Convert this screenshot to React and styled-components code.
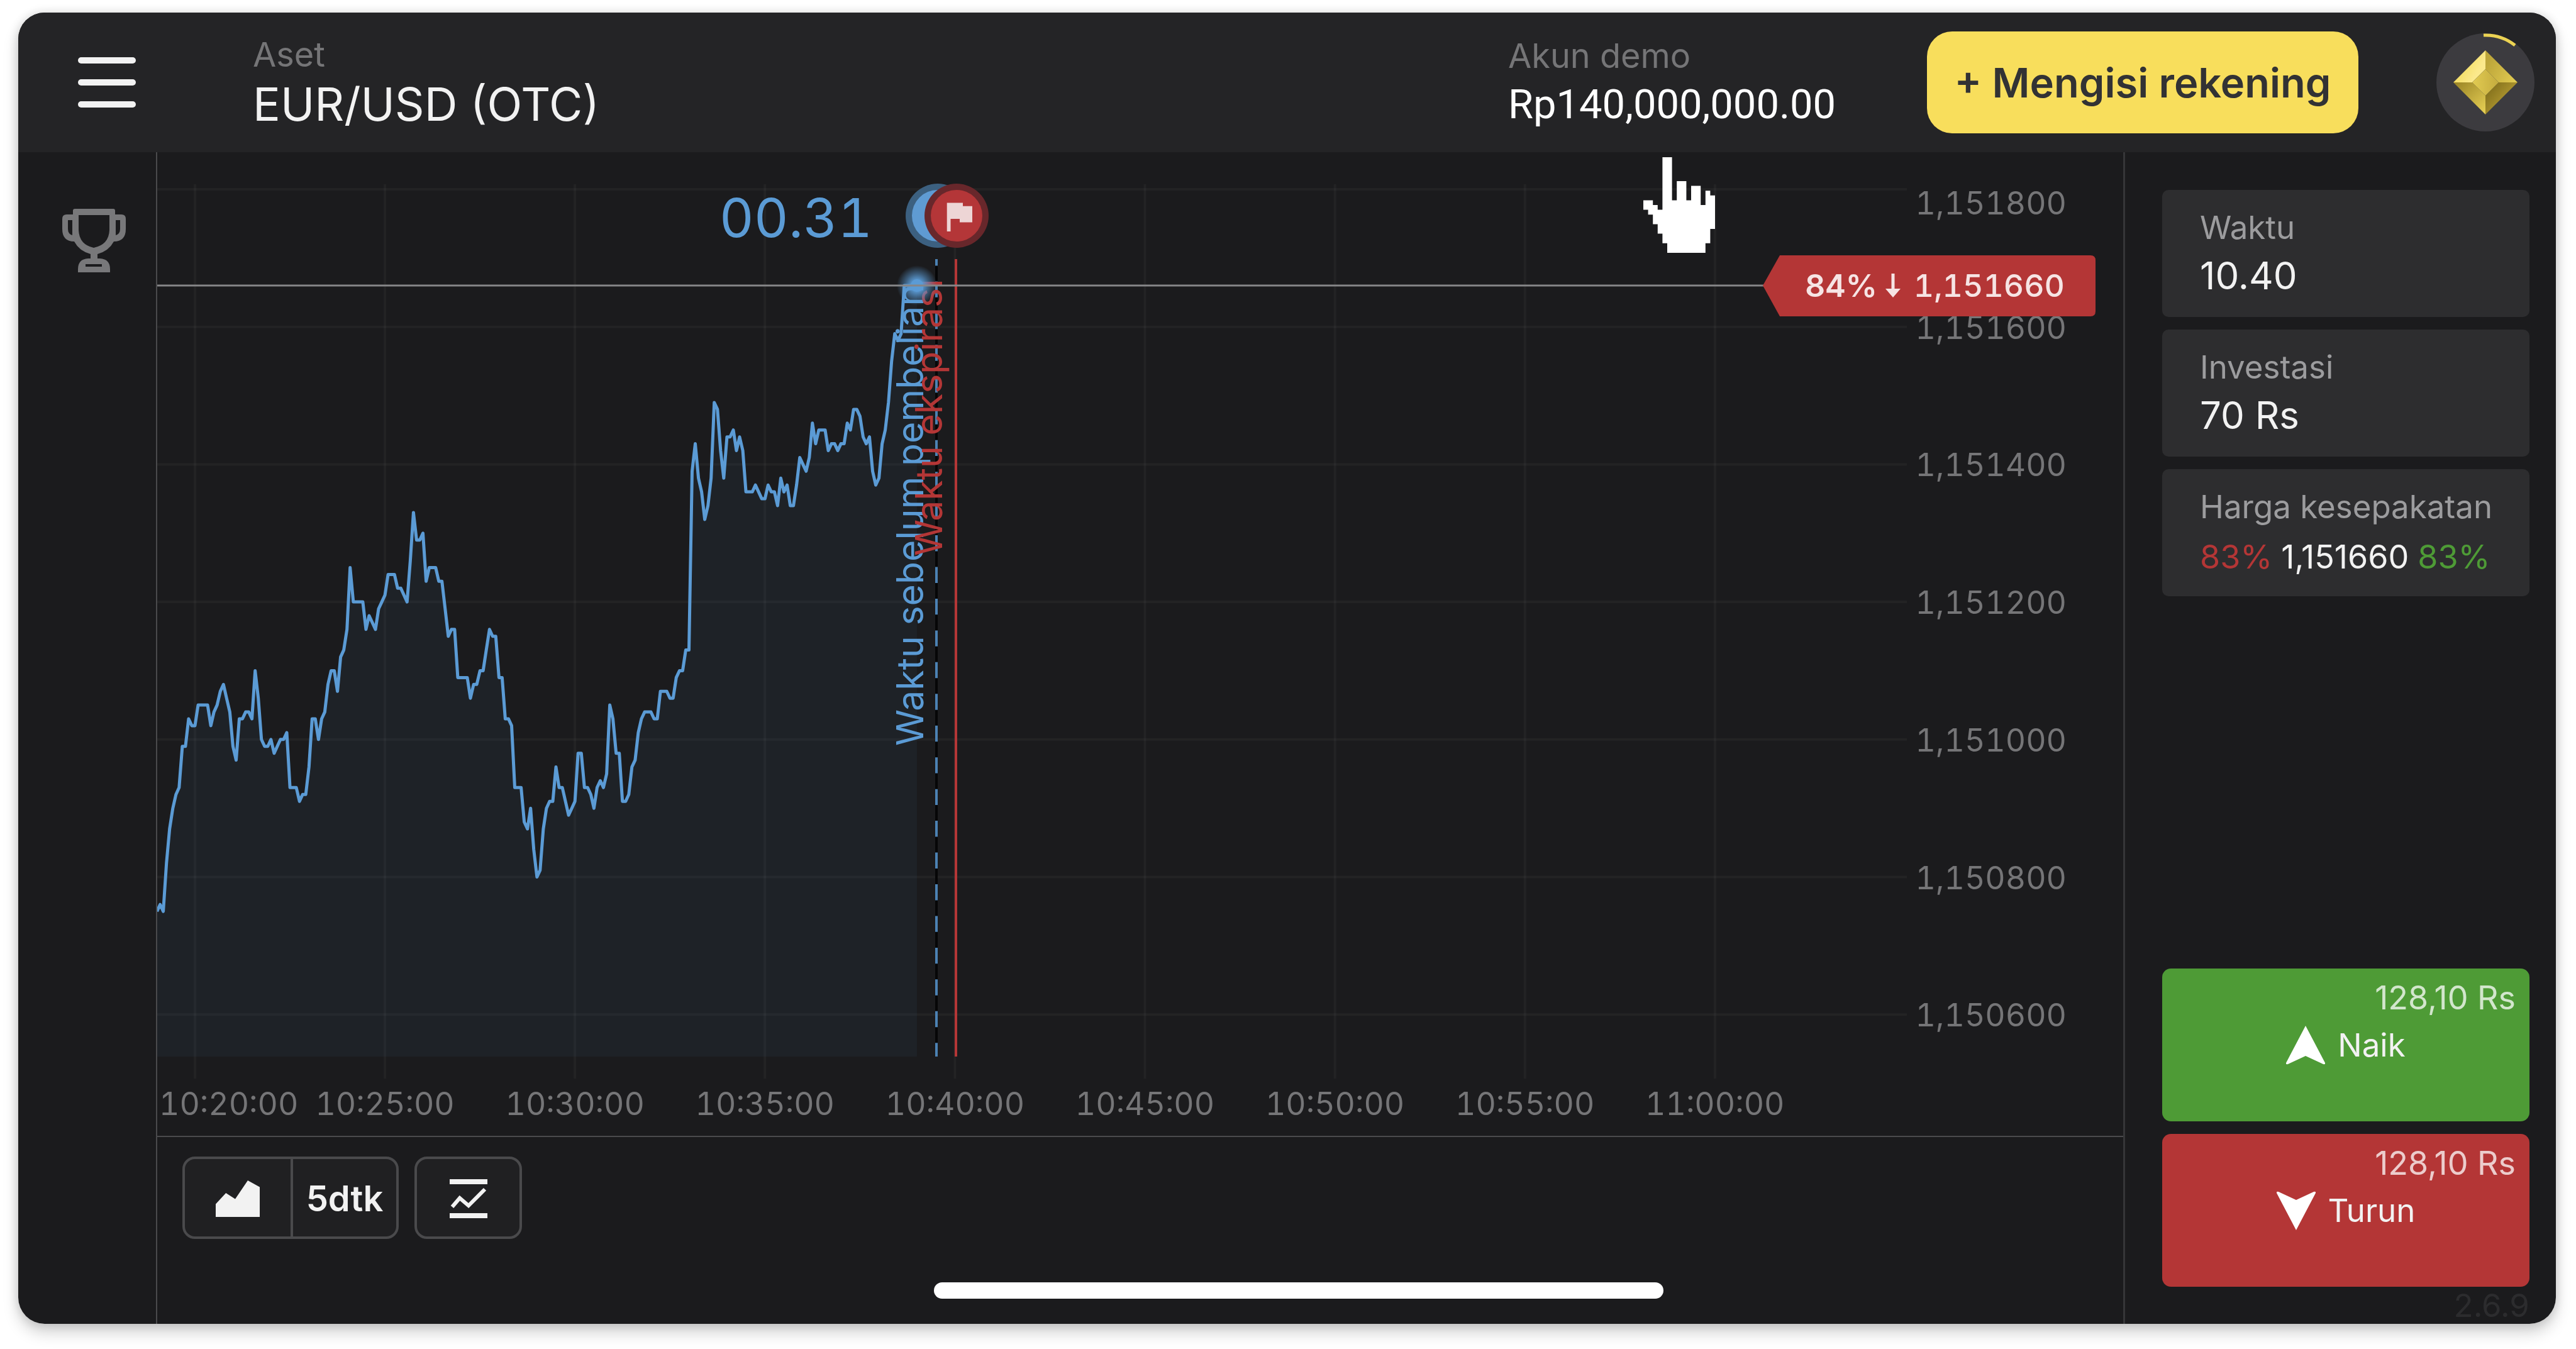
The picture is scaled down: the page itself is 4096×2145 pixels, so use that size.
import React from "react";
import styled, { createGlobalStyle } from "styled-components";

const color = {
  panel: "#1b1b1d",
  header: "#242426",
  card: "#2d2d2f",
  line: "#4a4a4c",
  text: "#f2f2f2",
  muted: "#757577",
  label: "#9c9c9e",
  blue: "#5b9bd5",
  red: "#b43636",
  green: "#4e9b36",
  yellow: "#f8de5c",
};

const GlobalStyle = createGlobalStyle`
  *, *::before, *::after { box-sizing: border-box; }
  body {
    margin: 0;
    background: #ffffff;
    color: ${color.text};
    font-family: Inter, "Liberation Sans", sans-serif;
  }
  button, input { font: inherit; color: inherit; margin: 0; }
  button { cursor: pointer; }
`;

const Page = styled.div`
  display: flex;
  min-height: 100vh;
  padding: 20px 32px 40px 29px;
`;

const Device = styled.div`
  position: relative;
  flex: 1;
  display: flex;
  flex-direction: column;
  overflow: hidden;
  border-radius: 42px;
  background: ${color.panel};
`;

const Shadow = styled.div`
  flex: 1;
  display: flex;
  min-width: 0;
  border-radius: 42px;
  box-shadow: 0 14px 24px rgba(0, 0, 0, 0.18), 0 0 16px rgba(0, 0, 0, 0.14);
`;

const Header = styled.header`
  display: flex;
  align-items: center;
  height: 222px;
  padding: 0 34px 0 95px;
  background: ${color.header};
`;

const PlainButton = styled.button`
  padding: 0;
  border: 0;
  background: none;
  text-align: left;
`;

const MenuButton = styled(PlainButton)`
  display: flex;
  flex-direction: column;
  gap: 25px;
  width: 92px;
  margin-right: 186px;
`;

const MenuBar = styled.span`
  height: 10px;
  border-radius: 5px;
  background: ${color.text};
`;

const Field = styled(PlainButton)`
  display: flex;
  flex-direction: column;
  gap: 2px;
  padding-top: 4px;
`;

const AssetField = styled(Field)`
  flex: 1;
`;

const AccountField = styled(Field)`
  flex: 0 0 666px;
`;

const FieldLabel = styled.span`
  font-size: 54px;
  line-height: 64px;
  color: ${color.muted};
`;

const AssetName = styled.span`
  font-size: 73px;
  line-height: 90px;
`;

const Balance = styled.span`
  font-family: Roboto, Inter, sans-serif;
  font-size: 65px;
  line-height: 86px;
  color: #ffffff;
`;

const DepositButton = styled.button`
  width: 686px;
  height: 162px;
  margin-right: 124px;
  padding: 0;
  border: 0;
  border-radius: 40px;
  background: ${color.yellow};
  color: #323234;
  font-size: 65px;
  font-weight: 600;
  white-space: nowrap;
`;

const StatusButton = styled(PlainButton)`
  display: flex;
  width: 156px;
  height: 156px;
  border-radius: 50%;
`;

const Body = styled.div`
  flex: 1;
  display: grid;
  grid-template-columns: 221px 1fr 688px;
`;

const Rail = styled.nav`
  padding: 90px 0 0 70px;
  border-right: 2px solid ${color.line};
`;

const Main = styled.main`
  display: flex;
  flex-direction: column;
  min-width: 0;
`;

const ChartArea = styled.section`
  position: relative;
  border-bottom: 2px solid ${color.line};
`;

const ChartSvg = styled.svg`
  display: block;
  width: 100%;
  height: auto;
  font-family: Inter, "Liberation Sans", sans-serif;
`;

const AxisText = styled.text`
  font-size: 50px;
  font-variant-numeric: tabular-nums;
  fill: ${color.muted};
`;

const TagText = styled.text`
  font-size: 50px;
  font-weight: ${(p) => (p.$strong ? 600 : 500)};
  font-variant-numeric: tabular-nums;
  fill: #f6e4e4;
`;

const Countdown = styled.text`
  font-size: 85px;
  font-variant-numeric: tabular-nums;
  fill: ${color.blue};
`;

const LineCaption = styled.text`
  font-size: 59px;
  fill: ${(p) => p.$tone};
`;

const Pointer = styled.svg`
  position: absolute;
  top: 8px;
  left: 2363px;
  width: 114px;
  height: 152px;
`;

const Toolbar = styled.div`
  display: flex;
  gap: 25px;
  padding: 31px 40px;
`;

const ToolGroup = styled.div`
  display: flex;
  height: 131px;
  border: 4px solid ${color.line};
  border-radius: 20px;
  background: #202022;
`;

const Tool = styled.button`
  display: flex;
  align-items: center;
  justify-content: center;
  width: ${(p) => (p.$wide ? 168 : 163)}px;
  padding: 2px 0 0;
  border: 0;
  background: none;
  font-size: 56px;
  font-weight: 600;

  & + & {
    border-left: 4px solid ${color.line};
  }
`;

const Aside = styled.aside`
  display: flex;
  flex-direction: column;
  gap: 20px;
  padding: 60px 42px 0 59px;
  border-left: 3px solid #363638;
`;

const Card = styled.div`
  display: flex;
  flex-direction: column;
  height: 202px;
  padding: 28px 20px 0 60px;
  border-radius: 10px;
  background: ${color.card};
`;

const CardLabel = styled.label`
  font-size: 51px;
  line-height: 64px;
  color: ${color.label};
`;

const CardInput = styled.input`
  width: 100%;
  height: 88px;
  padding: 0;
  border: 0;
  outline: 0;
  background: none;
  font-size: 60px;
`;

const Rates = styled.div`
  display: flex;
  gap: 14px;
  padding-top: 16px;
  font-size: 52px;
  line-height: 64px;
  white-space: nowrap;
`;

const Rate = styled.span`
  color: ${(p) => p.$tone};
`;

const Orders = styled.div`
  display: flex;
  flex-direction: column;
  gap: 20px;
  margin-top: auto;
`;

const OrderButton = styled.button`
  display: grid;
  height: 243px;
  padding: 0;
  border: 0;
  border-radius: 14px;
  background: ${(p) => p.$tone};
  font-size: 51px;
  line-height: 58px;
`;

const Payout = styled.span`
  grid-area: 1 / 1;
  place-self: start end;
  padding: 18px 22px 0 0;
  font-size: 52px;
  color: rgba(255, 255, 255, 0.75);
`;

const OrderLabel = styled.span`
  grid-area: 1 / 1;
  place-self: center;
  display: flex;
  align-items: center;
  gap: 20px;
`;

const Version = styled.footer`
  height: 39px;
  font-size: 51px;
  line-height: 20px;
  text-align: right;
  color: #2c2c2e;
`;

const HomeIndicator = styled.div`
  position: absolute;
  left: 1456px;
  bottom: 40px;
  width: 1160px;
  height: 26px;
  border-radius: 13px;
  background: #ffffff;
`;

/* Chart geometry: five-second samples on x, price on y. */
const CHART = { width: 3126, height: 1564, top: 51, bottom: 1473, floor: 1438, right: 2782 };
const STEP = 302.1 / 60;
const xAt = (sample) => 60 + sample * STEP;
const yAt = (price) => 59 + ((1151800 - price) * 218.7) / 200;

/* One sample every five seconds from 10:19:00, in tens above 1,150000. */
const SAMPLES = [
  75, 76, 75, 82, 87, 90, 92, 93, 99, 99, 103, 102,
  102, 105, 105, 105, 105, 102, 104, 105, 107, 108, 106, 104, 99, 97, 103, 103, 104, 104, 103, 110,
  106, 100, 99, 99, 100, 98, 99, 100, 100, 101, 93, 93, 93, 91, 92, 92, 96, 103, 103, 100, 103, 104,
  108, 110, 110, 107, 112, 113, 116, 125, 120, 120, 120, 120, 116, 118, 117, 116, 119, 120,
  121, 124, 124, 124, 122, 122, 121, 120, 126, 133, 129, 129, 130, 123, 125, 125, 125, 123, 123, 119,
  115, 116, 116, 109, 109, 109, 109, 106, 108, 108, 110, 110, 113, 116, 115, 115, 109, 109, 103, 103,
  102, 93, 93, 93, 88, 87, 90, 84, 80, 81, 87, 90, 91, 91, 96, 93, 93, 91, 89, 90,
  91, 98, 98, 93, 93, 92, 90, 93, 94, 93, 95, 105, 103, 98, 98, 91, 91, 92, 96, 97, 101, 103, 104,
  104, 104, 103, 103, 107, 107, 107, 106, 106, 109, 110, 110, 113, 113, 139, 143, 138, 136, 132, 134,
  138, 149, 148, 142, 138, 144, 144, 145, 142, 144, 142, 136, 136, 136, 137, 136, 135,
  135, 137, 136, 136, 134, 138, 136, 137, 134, 134, 137, 141, 140, 139, 141, 146, 143, 145, 145, 145,
  142, 143, 143, 142, 143, 143, 146, 145, 148, 148, 147, 144, 143, 144, 139, 137, 138, 143, 145, 149,
  155, 159, 158, 159, 166, 166, 166, 166, 166,
];

const POINTS = SAMPLES.map((v, i) => `${xAt(i - 12).toFixed(1)},${yAt(1150000 + v * 10).toFixed(1)}`);
const LAST_X = xAt(SAMPLES.length - 13);
const PRICE_Y = yAt(1151660);

const TIMES = ["10:20:00", "10:25:00", "10:30:00", "10:35:00", "10:40:00", "10:45:00", "10:50:00", "10:55:00", "11:00:00"];
const PRICES = [1151800, 1151600, 1151400, 1151200, 1151000, 1150800, 1150600];
const formatPrice = (p) => `1,${String(p).slice(1)}`;

function PriceChart() {
  const line = POINTS.join(" ");
  return (
    <ChartSvg viewBox={`0 0 ${CHART.width} ${CHART.height}`} role="img" aria-label="EUR/USD (OTC)">
      <defs>
        <radialGradient id="glow">
          <stop offset="0.25" stopColor={color.blue} />
          <stop offset="0.6" stopColor={color.blue} stopOpacity="0.5" />
          <stop offset="1" stopColor={color.blue} stopOpacity="0" />
        </radialGradient>
      </defs>

      <polygon points={`0,${CHART.floor} ${line} ${LAST_X},${CHART.floor}`} fill={color.blue} fillOpacity="0.055" />

      <g stroke="#ffffff" strokeOpacity="0.035" strokeWidth="4">
        {TIMES.map((t, i) => (
          <line key={t} x1={xAt(i * 60)} x2={xAt(i * 60)} y1={CHART.top} y2={CHART.bottom} />
        ))}
        {PRICES.map((p) => (
          <line key={p} x1="0" x2={CHART.right} y1={yAt(p)} y2={yAt(p)} />
        ))}
      </g>

      {TIMES.map((t, i) => (
        <AxisText key={t} x={i === 0 ? 3 : xAt(i * 60)} y="1531" textAnchor={i === 0 ? "start" : "middle"}>
          {t}
        </AxisText>
      ))}
      {PRICES.map((p) => (
        <AxisText key={p} x="3036" y={Math.max(yAt(p), 80) + 19} textAnchor="end">
          {formatPrice(p)}
        </AxisText>
      ))}

      <polyline points={line} fill="none" stroke={color.blue} strokeWidth="5" strokeLinejoin="round" />

      <line x1="1239" x2="1239" y1="170" y2={CHART.floor} stroke="#060607" strokeWidth="4" />
      <line x1="1239" x2="1239" y1="170" y2={CHART.floor} stroke="#4c82b4" strokeWidth="4" strokeDasharray="25.4 25.05" strokeDashoffset="15" />
      <line x1="1270" x2="1270" y1="170" y2={CHART.floor} stroke={color.red} strokeWidth="4" />

      <LineCaption $tone={color.blue} transform="translate(1218 944) rotate(-90)">
        Waktu sebelum pembelian
      </LineCaption>
      <LineCaption $tone={color.red} transform="translate(1248 642) rotate(-90)">
        Waktu ekspirasi
      </LineCaption>

      <circle cx={LAST_X} cy={PRICE_Y} r="32" fill="url(#glow)" />
      <circle cx={LAST_X} cy={PRICE_Y} r="10" fill={color.blue} />
      <line x1="0" x2="2560" y1={PRICE_Y} y2={PRICE_Y} stroke="#868688" strokeWidth="3" />

      <Countdown x="1137" y="135" textAnchor="end">
        00.31
      </Countdown>
      <circle cx="1241" cy="101" r="51" fill="#3c6080" />
      <circle cx="1241" cy="101" r="41" fill="#5f9bd3" />
      <circle cx="1271" cy="101" r="51" fill="#68272b" />
      <circle cx="1271" cy="101" r="41" fill="#b43638" />
      <path
        transform="translate(1271 101)"
        d="M-15.3-20.5H10V-15.3H25V10.4H5V5H-9.5V25H-15.3Z"
        fill="#edd5d5"
      />

      <path d="M2553 212L2580 164H3074Q3082 164 3082 172V253Q3082 261 3074 261H2580Z" fill={color.red} />
      <TagText $strong x="2620" y="230">
        84%
      </TagText>
      <path d="M2760 193V224" stroke="#f6e4e4" strokeWidth="5" fill="none" />
      <path d="M2748 217H2772L2760 231Z" fill="#f6e4e4" />
      <TagText x="3033" y="230" textAnchor="end">
        1,151660
      </TagText>
    </ChartSvg>
  );
}

function TrophyIcon() {
  return (
    <svg width="101" height="101" viewBox="0 0 101 101" fill="none">
      <path
        fill="#78787a"
        fillRule="evenodd"
        d="M20 0H81Q84 0 84 3V9H94Q101 9 101 16V32Q101 52 82 52Q74 67 56 72V79H60Q76 80 76 96V101H25V96Q25 80 41 79H45V72Q27 67 19 52Q0 52 0 32V16Q0 9 7 9H17V3Q17 0 20 0ZM26 10V34Q27 57 50 62Q74 57 75 34V10ZM9 18V32Q9 40 16 42V18ZM85 18V42Q92 40 92 32V18ZM37 88V92H63V88Z"
      />
    </svg>
  );
}

function GemIcon() {
  return (
    <svg width="156" height="156" viewBox="0 0 156 156" fill="none">
      <defs>
        <linearGradient id="gemA" x1="27" y1="50" x2="60" y2="70" gradientUnits="userSpaceOnUse">
          <stop stopColor="#f0d850" />
          <stop offset="1" stopColor="#fbe98c" />
        </linearGradient>
        <linearGradient id="gemB" x1="80" y1="50" x2="128" y2="78" gradientUnits="userSpaceOnUse">
          <stop stopColor="#bda63a" />
          <stop offset="1" stopColor="#e3cc52" />
        </linearGradient>
        <linearGradient id="gemC" x1="32" y1="78" x2="78" y2="125" gradientUnits="userSpaceOnUse">
          <stop stopColor="#9c8627" />
          <stop offset="1" stopColor="#e6cf54" />
        </linearGradient>
        <linearGradient id="gemD" x1="80" y1="90" x2="110" y2="115" gradientUnits="userSpaceOnUse">
          <stop stopColor="#83701c" />
          <stop offset="1" stopColor="#b39a32" />
        </linearGradient>
        <linearGradient id="gemE" x1="57" y1="78" x2="99" y2="78" gradientUnits="userSpaceOnUse">
          <stop stopColor="#e2cb52" />
          <stop offset="1" stopColor="#c4ac3e" />
        </linearGradient>
      </defs>
      <circle cx="78" cy="78" r="78" fill="#3c3b3f" />
      <path d="M78 27L27 78H57L78 57Z" fill="url(#gemA)" />
      <path d="M78 27L129 78H99L78 57Z" fill="url(#gemB)" />
      <path d="M27 78H57L78 99V129Z" fill="url(#gemC)" />
      <path d="M129 78H99L78 99V129Z" fill="url(#gemD)" />
      <path d="M78 57L99 78L78 99L57 78Z" fill="url(#gemE)" />
      <path d="M75 3A75 75 0 0 1 125 19" stroke="#ecd353" strokeWidth="5" />
    </svg>
  );
}

function AreaIcon() {
  return (
    <svg width="70" height="58" viewBox="0 0 70 58">
      <path d="M0 58V37.5L16.2 20L31 29.5L51 0L70 10.4V58Z" fill={color.text} />
    </svg>
  );
}

function IndicatorIcon() {
  return (
    <svg width="60" height="62" viewBox="0 0 60 62" fill="none">
      <path d="M0 0H60V8H0ZM0 54H60V62H0Z" fill={color.text} />
      <path d="M4 44L16 30L30 42L56 16" stroke={color.text} strokeWidth="6" />
    </svg>
  );
}

function OrderArrow({ down }) {
  return (
    <svg width="62" height="62" viewBox="0 0 62 62">
      <path
        d={down ? "M31 62L0 3Q-1 0 3 1L31 14L59 1Q63 0 62 3Z" : "M31 0L0 59Q-1 62 3 61L31 48L59 61Q63 62 62 59Z"}
        fill="#ffffff"
      />
    </svg>
  );
}

export default function App() {
  return (
    <>
      <GlobalStyle />
      <Page>
        <Shadow>
          <Device>
            <Header>
              <MenuButton aria-label="Menu">
                <MenuBar />
                <MenuBar />
                <MenuBar />
              </MenuButton>
              <AssetField>
                <FieldLabel>Aset</FieldLabel>
                <AssetName>EUR/USD (OTC)</AssetName>
              </AssetField>
              <AccountField>
                <FieldLabel>Akun demo</FieldLabel>
                <Balance>Rp140,000,000.00</Balance>
              </AccountField>
              <DepositButton>+ Mengisi rekening</DepositButton>
              <StatusButton aria-label="Status">
                <GemIcon />
              </StatusButton>
            </Header>

            <Body>
              <Rail>
                <PlainButton aria-label="Turnamen">
                  <TrophyIcon />
                </PlainButton>
              </Rail>

              <Main>
                <ChartArea>
                  <PriceChart />
                  <Pointer viewBox="0 0 15 20" aria-hidden="true">
                    <path
                      fill="#ffffff"
                      d="M4 11V0H6V9H7V5H9V9H10V6H12V10H13V7H14V8H15V15H14V18H13V20H5V18H4V16H3V14H2V12H1V11H0V9H2V10H3V11Z"
                    />
                  </Pointer>
                </ChartArea>
                <Toolbar>
                  <ToolGroup>
                    <Tool $wide aria-label="Grafik">
                      <AreaIcon />
                    </Tool>
                    <Tool $wide>5dtk</Tool>
                  </ToolGroup>
                  <ToolGroup>
                    <Tool aria-label="Indikator">
                      <IndicatorIcon />
                    </Tool>
                  </ToolGroup>
                </Toolbar>
              </Main>

              <Aside>
                <Card>
                  <CardLabel htmlFor="waktu">Waktu</CardLabel>
                  <CardInput id="waktu" defaultValue="10.40" />
                </Card>
                <Card>
                  <CardLabel htmlFor="investasi">Investasi</CardLabel>
                  <CardInput id="investasi" defaultValue="70 Rs" />
                </Card>
                <Card>
                  <CardLabel as="span">Harga kesepakatan</CardLabel>
                  <Rates>
                    <Rate $tone={color.red}>83%</Rate>
                    <Rate $tone={color.text}>1,151660</Rate>
                    <Rate $tone={color.green}>83%</Rate>
                  </Rates>
                </Card>
                <Orders>
                  <OrderButton $tone={color.green}>
                    <Payout>128,10 Rs</Payout>
                    <OrderLabel>
                      <OrderArrow />
                      Naik
                    </OrderLabel>
                  </OrderButton>
                  <OrderButton $tone={color.red}>
                    <Payout>128,10 Rs</Payout>
                    <OrderLabel>
                      <OrderArrow down />
                      Turun
                    </OrderLabel>
                  </OrderButton>
                </Orders>
                <Version>2.6.9</Version>
              </Aside>
            </Body>
            <HomeIndicator />
          </Device>
        </Shadow>
      </Page>
    </>
  );
}
